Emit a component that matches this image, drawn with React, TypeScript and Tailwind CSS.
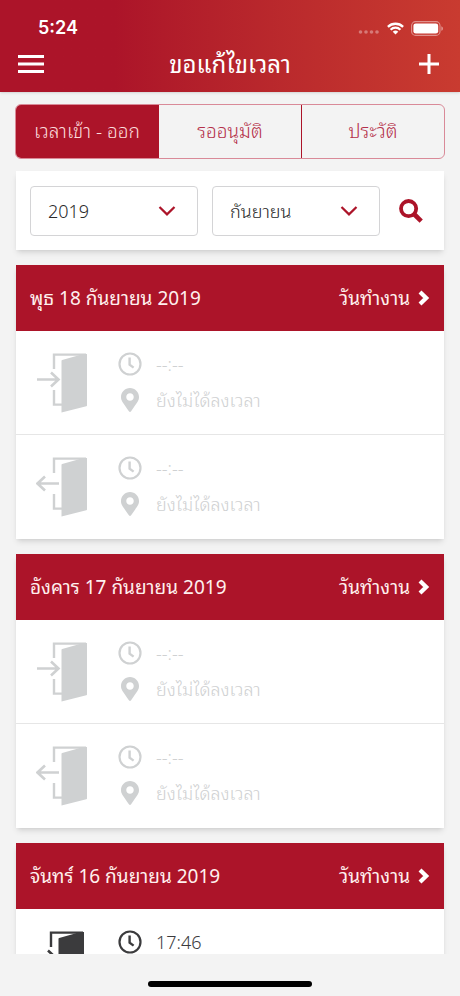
import React, { useState } from 'react';
import { FaMapMarkerAlt } from 'react-icons/fa';

type Direction = 'in' | 'out';

interface TimeEntry {
  direction: Direction;
  time?: string;
  place?: string;
}

interface WorkDay {
  date: string;
  status: string;
  entries: TimeEntry[];
}

const TABS = ['เวลาเข้า - ออก', 'รออนุมัติ', 'ประวัติ'];

const YEARS = ['2019', '2018', '2017'];

const MONTHS = [
  'มกราคม',
  'กุมภาพันธ์',
  'มีนาคม',
  'เมษายน',
  'พฤษภาคม',
  'มิถุนายน',
  'กรกฎาคม',
  'สิงหาคม',
  'กันยายน',
  'ตุลาคม',
  'พฤศจิกายน',
  'ธันวาคม',
];

const DAYS: WorkDay[] = [
  { date: 'พุธ 18 กันยายน 2019', status: 'วันทำงาน', entries: [{ direction: 'in' }, { direction: 'out' }] },
  { date: 'อังคาร 17 กันยายน 2019', status: 'วันทำงาน', entries: [{ direction: 'in' }, { direction: 'out' }] },
  { date: 'จันทร์ 16 กันยายน 2019', status: 'วันทำงาน', entries: [{ direction: 'in', time: '17:46' }] },
];

const DoorIcon: React.FC<{ direction: Direction; filled?: boolean }> = ({ direction, filled }) => (
  <svg
    viewBox={filled ? '3 0 52 62' : '0 0 52 62'}
    className="w-[52px] h-[62px] shrink-0"
    fill="none"
    stroke="currentColor"
    strokeWidth="2.4"
    aria-hidden="true"
  >
    <path d="M18 17V2.6H50" />
    <path d="M18 38V52.6H26" />
    <path d="M25.5 9Q25.5 8.3 26.2 8.1L43 3.2V2H51V53.4Q51 54.1 50.3 54.3L25.5 60.5Z" fill="currentColor" stroke="none" />
    {direction === 'in' ? (
      <path d="M1 27.5H22M15 20.5L22.5 27.5L15 34.5" strokeWidth="2.6" />
    ) : (
      <path d="M23 27.5H2M9 20.5L1.5 27.5L9 34.5" strokeWidth="2.6" />
    )}
  </svg>
);

const ClockIcon: React.FC = () => (
  <svg viewBox="0 0 24 24" className="w-6 h-6 shrink-0" fill="none" stroke="currentColor" aria-hidden="true">
    <circle cx="12" cy="12" r="10.5" strokeWidth="2.2" />
    <path d="M11.6 5.5V12.6L15.6 15.6" strokeWidth="2.4" />
  </svg>
);

const StatusBar: React.FC = () => (
  <div className="flex items-center justify-between h-11 pt-3 pl-[38px] pr-4">
    <span className="font-['Inter',sans-serif] text-lg leading-6 font-semibold">5:24</span>
    <div className="flex items-center gap-[7px]">
      <svg viewBox="0 0 22 4" className="w-[22px] h-1 mt-2 opacity-35" fill="currentColor" aria-hidden="true">
        <circle cx="2.5" cy="2" r="1.8" />
        <circle cx="8" cy="2" r="1.8" />
        <circle cx="13.5" cy="2" r="1.8" />
        <circle cx="19" cy="2" r="1.8" />
      </svg>
      <svg viewBox="0 0 17 13" className="w-[17px] h-[13px]" fill="none" stroke="currentColor" strokeWidth="2.3" aria-hidden="true">
        <path d="M0.9 4.9A10.8 10.8 0 0 1 16.1 4.9" />
        <path d="M3.6 7.7A7 7 0 0 1 13.4 7.7" />
        <path d="M8.5 12.6L5.7 9.8A4 4 0 0 1 11.3 9.8Z" fill="currentColor" stroke="none" />
      </svg>
      <svg viewBox="0 0 33 15" className="w-[33px] h-[15px]" fill="currentColor" aria-hidden="true">
        <rect x="0.6" y="0.6" width="28.4" height="13.8" rx="4" fill="none" stroke="currentColor" strokeOpacity="0.45" strokeWidth="1.1" />
        <rect x="2.4" y="2.4" width="24.8" height="10.2" rx="2.4" />
        <path d="M30.4 5.2C32.4 6 32.4 9 30.4 9.8Z" fillOpacity="0.5" />
      </svg>
    </div>
  </div>
);

interface PickerProps {
  id: string;
  label: string;
  value: string;
  options: string[];
  onChange: (value: string) => void;
}

const Picker: React.FC<PickerProps> = ({ id, label, value, options, onChange }) => (
  <div className="relative flex-1">
    <label htmlFor={id} className="sr-only">{label}</label>
    <select
      id={id}
      value={value}
      onChange={(e) => onChange(e.target.value)}
      className="block w-full h-[50px] appearance-none bg-white border border-[#d4d4d6] rounded px-[17px] text-lg font-light text-[#2a2a2a]"
    >
      {options.map((option) => (
        <option key={option} value={option}>{option}</option>
      ))}
    </select>
    <svg
      viewBox="0 0 18 10"
      className="absolute right-[22px] top-5 w-[18px] h-[10px] text-[#ac1429] pointer-events-none"
      fill="none"
      stroke="currentColor"
      strokeWidth="2.2"
      aria-hidden="true"
    >
      <path d="M1.5 1L9 8.4L16.5 1" />
    </svg>
  </div>
);

const EntryRow: React.FC<{ entry: TimeEntry }> = ({ entry }) => {
  const filled = Boolean(entry.time);

  return (
    <li className={`flex items-center h-[104px] pl-5 pr-4 ${filled ? 'text-[#3b3b3d]' : 'text-[#cfd1d2]'}`}>
      <DoorIcon direction={entry.direction} filled={filled} />
      <div className="ml-[30px] pb-0.5 flex flex-col gap-3 text-lg leading-6 font-light">
        <div className="flex items-center gap-[14px] h-6">
          <ClockIcon />
          <span>{entry.time ?? '--:--'}</span>
        </div>
        <div className="flex items-center gap-[14px] h-6">
          <FaMapMarkerAlt className="w-6 h-6 shrink-0" />
          <span>{entry.place ?? 'ยังไม่ได้ลงเวลา'}</span>
        </div>
      </div>
    </li>
  );
};

const DayCard: React.FC<{ day: WorkDay }> = ({ day }) => (
  <section className="bg-white shadow-md shrink-0">
    <a href="#day" className="flex items-center justify-between h-[66px] px-[14px] bg-[#ac1429] text-[#fff0ee] text-[19px]">
      <h2>{day.date}</h2>
      <span className="flex items-center gap-2">
        {day.status}
        <svg viewBox="0 0 12 16" className="w-3 h-4" fill="none" stroke="#fff" strokeWidth="4.2" aria-hidden="true">
          <path d="M2 2L8.2 8L2 14" />
        </svg>
      </span>
    </a>
    <ul>
      {day.entries.map((entry, index) => (
        <React.Fragment key={entry.direction}>
          {index > 0 && <li aria-hidden="true" className="h-px -mt-px bg-[#e6e6e6]" />}
          <EntryRow entry={entry} />
        </React.Fragment>
      ))}
    </ul>
  </section>
);

const App: React.FC = () => {
  const [tab, setTab] = useState(0);
  const [year, setYear] = useState('2019');
  const [month, setMonth] = useState('กันยายน');

  return (
    <div className="h-screen flex flex-col bg-[#f3f3f3] font-['Noto_Sans','Noto_Sans_Thai_Looped',sans-serif]">
      <header className="shrink-0 h-[92px] bg-linear-to-r from-[#ac1429] from-25% to-[#c93b30] text-white shadow-sm">
        <StatusBar />
        <div className="flex items-center justify-between h-10 px-[18px]">
          <button type="button" aria-label="เมนู">
            <svg viewBox="0 0 26 18" className="w-[26px] h-[18px]" fill="currentColor" aria-hidden="true">
              <path d="M0 0H26V3H0ZM0 7.5H26V10.5H0ZM0 15H26V18H0Z" />
            </svg>
          </button>
          <h1 className="text-2xl">ขอแก้ไขเวลา</h1>
          <button type="button" aria-label="เพิ่ม">
            <svg viewBox="0 0 26 20" className="w-[26px] h-5" fill="none" stroke="currentColor" strokeWidth="3" aria-hidden="true">
              <path d="M3 10H23M13 0V20" />
            </svg>
          </button>
        </div>
      </header>

      <main className="flex-1 min-h-0 overflow-hidden px-4 pt-3">
        <nav className="flex h-[55px] -mx-px mb-3 border border-[#d98a98] rounded-md overflow-hidden">
          {TABS.map((label, index) => (
            <button
              key={label}
              type="button"
              onClick={() => setTab(index)}
              className={`flex-1 border-r border-[#ac1429] last:border-r-0 text-[19px] font-light ${index === tab ? 'bg-[#ac1429] text-[#fbdcdc]' : 'text-[#b5304a]'}`}
            >
              {label}
            </button>
          ))}
        </nav>

        <form className="flex items-center gap-[14px] h-[79px] mb-[15px] pl-[14px] bg-white shadow-md" onSubmit={(e) => e.preventDefault()}>
          <Picker id="year" label="ปี" value={year} options={YEARS} onChange={setYear} />
          <Picker id="month" label="เดือน" value={month} options={MONTHS} onChange={setMonth} />
          <button type="submit" aria-label="ค้นหา" className="w-[50px] pl-[5px] text-[#ac1429]">
            <svg viewBox="0 0 24 24" className="w-6 h-6" fill="none" stroke="currentColor" aria-hidden="true">
              <circle cx="9.6" cy="9.6" r="7.6" strokeWidth="3.8" />
              <path d="M15 15L22.2 22.2" strokeWidth="4.6" />
            </svg>
          </button>
        </form>

        <div className="flex flex-col gap-[15px]">
          {DAYS.map((day) => (
            <DayCard key={day.date} day={day} />
          ))}
        </div>
      </main>

      <footer className="shrink-0 h-[42px] flex items-end justify-center pb-[9px]">
        <div className="w-[164px] h-[6px] rounded-full bg-black" />
      </footer>
    </div>
  );
};

export default App;
